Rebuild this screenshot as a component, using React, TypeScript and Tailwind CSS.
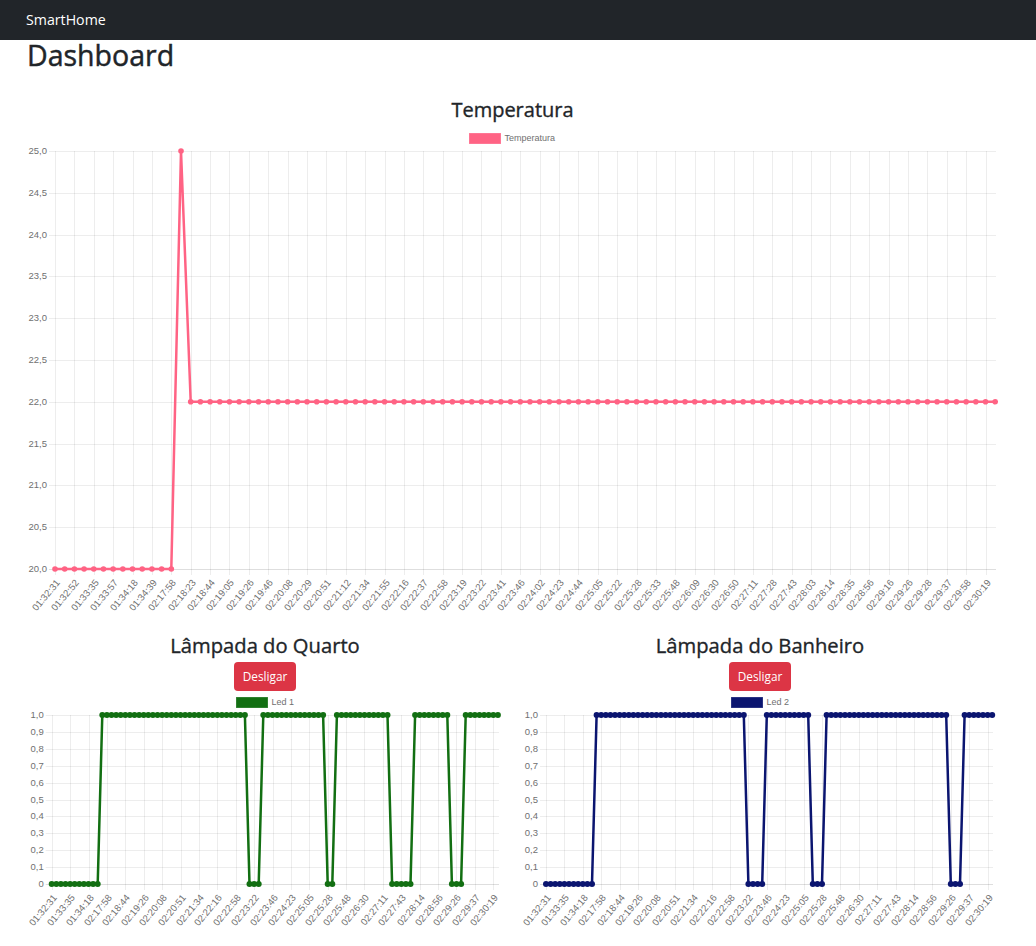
const topLabels = "01:32:31 01:32:52 01:33:35 01:33:57 01:34:18 01:34:39 02:17:58 02:18:23 02:18:44 02:19:05 02:19:26 02:19:46 02:20:08 02:20:29 02:20:51 02:21:12 02:21:34 02:21:55 02:22:16 02:22:37 02:22:58 02:23:19 02:23:22 02:23:41 02:23:46 02:24:02 02:24:23 02:24:44 02:25:05 02:25:22 02:25:28 02:25:33 02:25:48 02:26:09 02:26:30 02:26:50 02:27:11 02:27:28 02:27:43 02:28:03 02:28:14 02:28:35 02:28:56 02:29:16 02:29:26 02:29:28 02:29:37 02:29:58 02:30:19".split(" ");
const lampLabels = "01:32:31 01:33:35 01:34:18 02:17:58 02:18:44 02:19:26 02:20:08 02:20:51 02:21:34 02:22:16 02:22:58 02:23:22 02:23:46 02:24:23 02:25:05 02:25:28 02:25:48 02:26:30 02:27:11 02:27:43 02:28:14 02:28:56 02:29:26 02:29:37 02:30:19".split(" ");

const TOTAL = 98;

// indices where the lamp is off, the rest of the 98 readings are on
function lampData(off: [number, number][]) {
  return Array.from({ length: TOTAL }, (_, i) =>
    off.some(([a, b]) => i >= a && i <= b) ? 0 : 1
  );
}

const tempData = Array.from({ length: TOTAL }, (_, i) => (i <= 12 ? 20 : i === 13 ? 25 : 22));
const led1 = lampData([[0, 10], [43, 45], [60, 61], [74, 78], [87, 89]]);
const led2 = lampData([[0, 10], [44, 47], [58, 60], [88, 90]]);

interface ChartProps {
  // the viewBox uses page coordinates, so plot numbers read straight off the screenshot
  box: [number, number, number, number];
  left: number;
  right: number;
  top: number;
  bottom: number;
  xStep: number;
  data: number[];
  min: number;
  max: number;
  yLabels: string[];
  xLabels: string[];
  color: string;
  radius: number;
  tickW: number;
  legend: { label: string; boxX: number; boxY: number };
}

function LineChart({ box, left, right, top, bottom, xStep, data, min, max, yLabels, xLabels, color, radius, tickW, legend }: ChartProps) {
  const px = (i: number) => left + i * xStep;
  const py = (v: number) => bottom - ((v - min) / (max - min)) * (bottom - top);
  const gridStep = (bottom - top) / (yLabels.length - 1);
  const labelStep = (xStep * (data.length - 2)) / (xLabels.length - 1);
  const line = data.map((v, i) => `${px(i).toFixed(1)},${py(v).toFixed(1)}`).join(" ");

  return (
    <svg
      className="block"
      width={box[2]}
      height={box[3]}
      viewBox={box.join(" ")}
      fontFamily="'Liberation Sans', Arial, sans-serif"
    >
      <rect x={legend.boxX + 0.5} y={legend.boxY + 0.5} width={31} height={10} fill={color} stroke={color} strokeOpacity={0.75} />
      <text x={legend.boxX + 35.5} y={legend.boxY + 8} fontSize={9} fill="#707070">{legend.label}</text>

      {yLabels.map((t, i) => {
        const y = Math.round(top + i * gridStep) + 0.5;
        return (
          <g key={t}>
            <line x1={left - tickW} x2={right} y1={y} y2={y} stroke="#000" strokeOpacity={i === yLabels.length - 1 ? 0.13 : 0.07} />
            <text x={left - tickW - 2} y={y + 2} fontSize={9.5} fill="#707070" textAnchor="end">{t}</text>
          </g>
        );
      })}

      {xLabels.map((t, i) => {
        const x = Math.round(left + i * labelStep) + 0.5;
        return (
          <g key={t}>
            <line x1={x} x2={x} y1={top} y2={bottom + 6} stroke="#000" strokeOpacity={0.07} />
            <text
              transform={`translate(${x + 5} ${bottom + 14}) rotate(-50)`}
              fontSize={9.6}
              fill="#707070"
              textAnchor="end"
            >
              {t}
            </text>
          </g>
        );
      })}

      <polyline points={line} fill="none" stroke={color} strokeWidth={2.5} strokeLinejoin="round" />
      {data.map((v, i) => (
        <circle key={i} cx={px(i)} cy={py(v)} r={radius} fill={color} />
      ))}
    </svg>
  );
}

const lampY = ["1,0", "0,9", "0,8", "0,7", "0,6", "0,5", "0,4", "0,3", "0,2", "0,1", "0"];
const tempY = ["25,0", "24,5", "24,0", "23,5", "23,0", "22,5", "22,0", "21,5", "21,0", "20,5", "20,0"];

function Lamp({ title, children }: { title: string; children: React.ReactNode }) {
  return (
    <section className="flex flex-col items-center">
      <h2 className="mt-[2px] text-[20.2px] leading-[28px] text-[#212529] [-webkit-text-stroke:0.35px_#212529]">{title}</h2>
      <button type="button" className="mt-[3px] h-[29px] w-[62px] rounded-[4px] bg-[#dc3545] text-[11.8px] text-white">
        Desligar
      </button>
      {children}
    </section>
  );
}

export default function App() {
  return (
    <div className="h-[946px] overflow-hidden bg-white font-['Open_Sans','Noto_Sans',sans-serif]">
      <nav className="flex h-10 items-center bg-[#212529] px-[26px]">
        <span className="text-[14.2px] text-white">SmartHome</span>
      </nav>
      <main className="pl-[27px] pr-[38px]">
        <h1 className="h-[56px] -translate-y-px text-[28.5px] leading-[32px] text-[#212529] [-webkit-text-stroke:0.45px_#212529]">Dashboard</h1>
        <h2 className="text-center text-[20px] leading-[28px] text-[#212529] [-webkit-text-stroke:0.35px_#212529]">Temperatura</h2>
        <LineChart
          box={[27, 124, 971, 505]}
          left={55}
          right={996}
          top={151}
          bottom={569}
          xStep={9.693}
          data={tempData}
          min={20}
          max={25}
          yLabels={tempY}
          xLabels={topLabels}
          color="#ff6384"
          radius={2.8}
          tickW={6}
          legend={{ label: "Temperatura", boxX: 469, boxY: 133 }}
        />
        <div className="grid grid-cols-2 gap-x-[19px]">
          <Lamp title="Lâmpada do Quarto">
            <LineChart
              box={[27, 691, 476, 255]}
              left={51.7}
              right={499}
              top={715}
              bottom={884}
              xStep={4.6}
              data={led1}
              min={0}
              max={1}
              yLabels={lampY}
              xLabels={lampLabels}
              color="#126f12"
              radius={3}
              tickW={6}
              legend={{ label: "Led 1", boxX: 236, boxY: 697 }}
            />
          </Lamp>
          <Lamp title="Lâmpada do Banheiro">
            <LineChart
              box={[522, 691, 476, 255]}
              left={546}
              right={993}
              top={715}
              bottom={884}
              xStep={4.6}
              data={led2}
              min={0}
              max={1}
              yLabels={lampY}
              xLabels={lampLabels}
              color="#0b1570"
              radius={3}
              tickW={6}
              legend={{ label: "Led 2", boxX: 731, boxY: 697 }}
            />
          </Lamp>
        </div>
      </main>
    </div>
  );
}
